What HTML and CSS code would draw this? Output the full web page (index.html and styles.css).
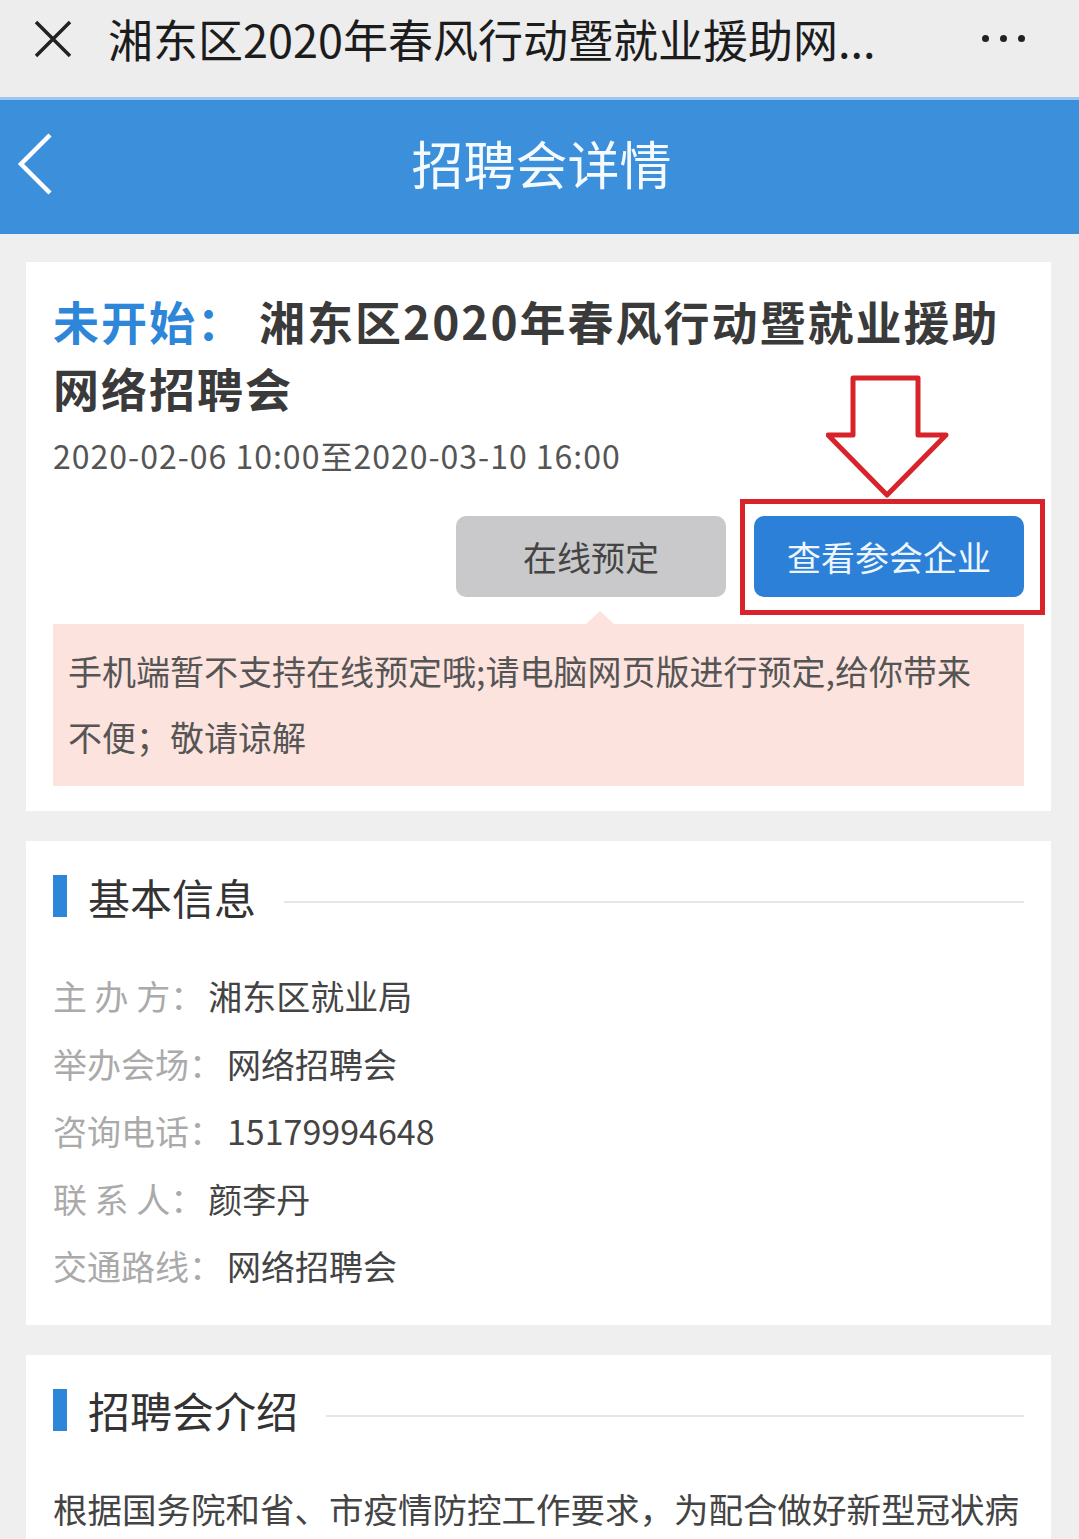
FILE: index.html
```html
<!DOCTYPE html>
<html lang="zh-CN">
<head>
    <meta charset="UTF-8">
    <meta name="viewport" content="width=device-width, initial-scale=1.0">
    <title>招聘会详情</title>
    <link rel="stylesheet" href="styles.css">
</head>
<body>
    <div class="topbar">
        <svg class="close-icon" width="40" height="40" viewBox="0 0 40 40">
            <path d="M3 3 L37 37 M37 3 L3 37" stroke="#222" stroke-width="3.5" fill="none"/>
        </svg>
        <span class="topbar-title">湘东区2020年春风行动暨就业援助网...</span>
        <span class="more"><i></i><i></i><i></i></span>
    </div>

    <div class="header">
        <svg class="back-icon" width="40" height="64" viewBox="0 0 40 64">
            <path d="M34 3 L5 32 L34 61" stroke="#fff" stroke-width="4.5" fill="none"/>
        </svg>
        <span class="header-title">招聘会详情</span>
    </div>

    <div class="content">
        <div class="card">
            <div class="fair-title"><span class="status">未开始：</span>湘东区2020年春风行动暨就业援助<br>网络招聘会</div>
            <div class="fair-time">2020-02-06 10:00至2020-03-10 16:00</div>
            <div class="actions">
                <div class="btn btn-gray">在线预定</div>
                <div class="btn btn-blue">
                    查看参会企业
                    <span class="highlight"></span>
                    <svg class="arrow" width="124" height="124" viewBox="0 0 124 124">
                        <polygon points="27,3 92,3 92,60 120,60 61,120 2,60 27,60" fill="#fff" stroke="#d8232a" stroke-width="5" stroke-linejoin="round"/>
                    </svg>
                </div>
            </div>
            <div class="notice">手机端暂不支持在线预定哦;请电脑网页版进行预定,给你带来<br>不便；敬请谅解</div>
        </div>

        <div class="card">
            <div class="section-head">
                <span class="bar"></span>
                <span class="section-title">基本信息</span>
                <span class="line"></span>
            </div>
            <div class="info-list">
                <div class="info-row"><span class="label">主 办 方：</span><span class="val">湘东区就业局</span></div>
                <div class="info-row"><span class="label">举办会场：</span><span class="val">网络招聘会</span></div>
                <div class="info-row"><span class="label">咨询电话：</span><span class="val">15179994648</span></div>
                <div class="info-row"><span class="label">联 系 人：</span><span class="val">颜李丹</span></div>
                <div class="info-row"><span class="label">交通路线：</span><span class="val">网络招聘会</span></div>
            </div>
        </div>

        <div class="card">
            <div class="section-head">
                <span class="bar"></span>
                <span class="section-title">招聘会介绍</span>
                <span class="line"></span>
            </div>
            <p class="intro">根据国务院和省、市疫情防控工作要求，为配合做好新型冠状病毒感染的肺炎疫情防控工作，减少人员聚集，湘东区就业局举办2020年春风行动暨就业援助网络招聘会。</p>
        </div>
    </div>
</body>
</html>
```

FILE: styles.css
```css
body {
    margin: 0;
    background: #efeff0;
    font-family: "Noto Sans CJK SC", "Noto Sans", sans-serif;
    color: #333;
}

.topbar {
    height: 77px;
    padding-bottom: 20px;
    display: flex;
    align-items: center;
    background: #ededee;
}
.close-icon {
    margin-left: 33px;
}
.topbar-title {
    margin-left: 35px;
    font-size: 45px;
    color: #1c1c1c;
}
.more {
    margin-left: auto;
    margin-right: 54px;
    display: flex;
    gap: 11px;
}
.more i {
    width: 7px;
    height: 7px;
    border-radius: 50%;
    background: #222;
}

.header {
    height: 134px;
    border-top: 3px solid #9cc6ee;
    background: #3b8fdb;
    display: flex;
    align-items: center;
    justify-content: center;
    position: relative;
}
.back-icon {
    position: absolute;
    left: 16px;
    top: 32px;
}
.header-title {
    font-size: 52px;
    color: #f4faff;
    margin-left: 4px;
    margin-top: -10px;
}

.content {
    padding: 28px 28px 0 26px;
    display: flex;
    flex-direction: column;
    gap: 30px;
}
.card {
    background: #fff;
    padding: 25px 27px 25px 27px;
}

.fair-title {
    font-size: 46px;
    font-weight: bold;
    line-height: 67px;
    color: #3a3a3a;
    letter-spacing: 2px;
}
.status {
    color: #2e86d8;
    margin-right: 14px;
}
.fair-time {
    margin-top: 12px;
    font-size: 32px;
    line-height: 44px;
    color: #555;
    letter-spacing: 1px;
}

.actions {
    margin-top: 39px;
    display: flex;
    justify-content: flex-end;
    gap: 28px;
}
.btn {
    width: 270px;
    height: 81px;
    border-radius: 10px;
    display: flex;
    align-items: center;
    justify-content: center;
    font-size: 34px;
}
.btn-gray {
    background: #c9c9cb;
    color: #444;
}
.btn-blue {
    background: #2c80d8;
    color: #eef6ff;
    position: relative;
}
.highlight {
    position: absolute;
    top: -17px;
    left: -14px;
    right: -21px;
    bottom: -18px;
    border: 5px solid #d8232a;
}
.arrow {
    position: absolute;
    left: 72px;
    top: -141px;
}

.notice {
    position: relative;
    margin-top: 27px;
    background: #fce3de;
    padding: 14px 15px 16px;
    font-size: 34px;
    line-height: 66px;
    color: #555;
}
.notice::before {
    content: '';
    position: absolute;
    top: -13px;
    left: 533px;
    border-left: 14px solid transparent;
    border-right: 14px solid transparent;
    border-bottom: 13px solid #fce3de;
}

.section-head {
    display: flex;
    align-items: center;
    height: 60px;
}
.bar {
    width: 14px;
    height: 42px;
    background: #2e86d8;
}
.section-title {
    margin-left: 21px;
    font-size: 42px;
    color: #333;
}
.line {
    flex: 1;
    height: 2px;
    background: #e6e6e8;
    margin-left: 28px;
    margin-top: 12px;
}

.info-list {
    margin-top: 36px;
}
.info-row {
    font-size: 34px;
    line-height: 67.5px;
}
.label {
    color: #aaa;
}
.val {
    color: #444;
    margin-left: 4px;
}

.intro {
    margin: 38px 0 0;
    font-size: 34.5px;
    line-height: 60px;
    color: #444;
}
```
